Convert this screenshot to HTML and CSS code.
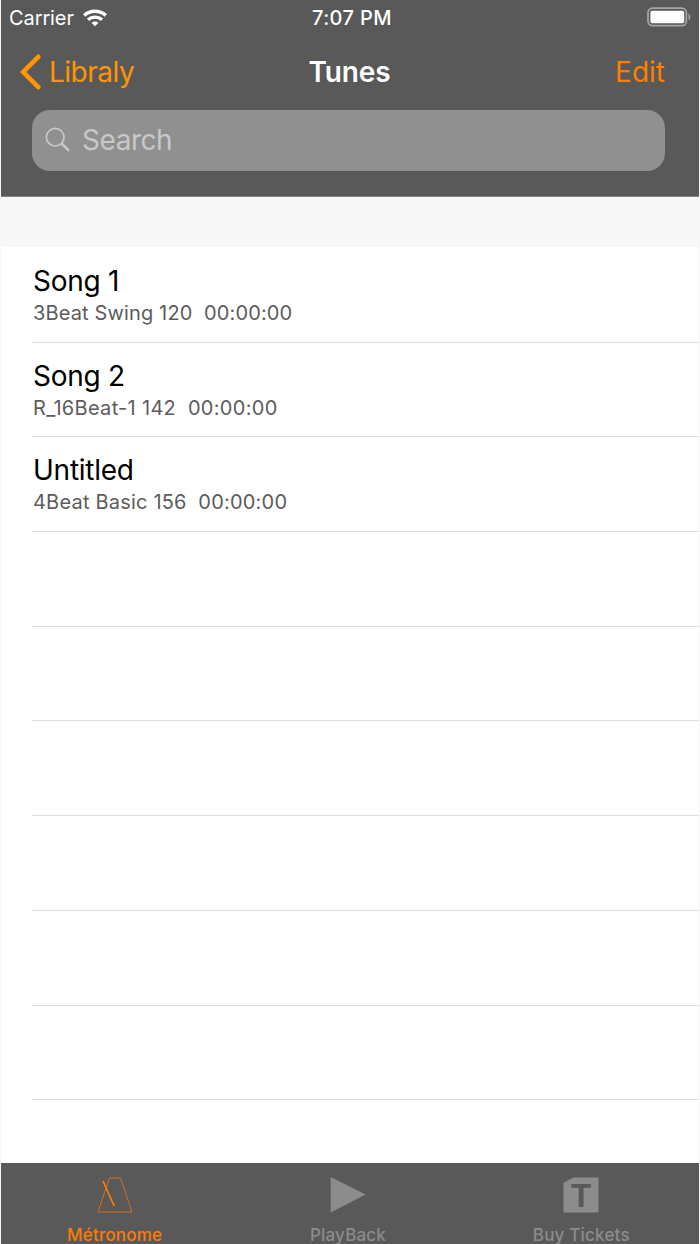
FILE: index.html
```html
<!DOCTYPE html>
<html lang="en">

<head>
    <meta charset="utf-8">
    <title>Tunes</title>
    <link rel="stylesheet" href="styles.css">
</head>

<body>
    <div class="phone">
        <header class="top">
            <div class="status-bar">
                <div class="carrier">
                    <span class="carrier-name">Carrier</span>
                    <svg class="wifi" width="24" height="18" viewBox="0 0 24 18">
                        <path d="M1.2 6.4C7.2.8 16.8.8 22.8 6.4" />
                        <path d="M5 10.7c3.9-3.5 10.1-3.5 14 0" />
                        <path class="dot" d="M12 17.2l-3.5-3.5c2-1.7 5-1.7 7 0z" />
                    </svg>
                </div>
                <span class="time">7:07 PM</span>
                <svg class="battery" width="45" height="20" viewBox="0 0 45 20">
                    <rect class="shell" x="1" y="1.2" width="38.4" height="17.4" rx="4.5" />
                    <rect class="charge" x="3.4" y="3.8" width="33.8" height="12.5" rx="2" />
                    <path class="cap" d="M41.5 6.5c2.4 1.2 2.4 5.6 0 6.8z" />
                </svg>
            </div>
            <nav class="nav-bar">
                <a class="back">
                    <svg width="22" height="36" viewBox="0 0 22 36">
                        <path d="M19.3 2.8L4.2 18l15.1 15.2" />
                    </svg>
                    <span class="back-label">Libraly</span>
                </a>
                <h1 class="title">Tunes</h1>
                <a class="edit">Edit</a>
            </nav>
            <div class="search">
                <svg width="26" height="26" viewBox="0 0 26 26">
                    <circle cx="10.2" cy="10.2" r="8.8" />
                    <path d="M16.8 16.8l6.5 6.3" />
                </svg>
                <span class="search-label">Search</span>
            </div>
        </header>

        <div class="section-head"></div>

        <ul class="tunes">
            <li class="tune">
                <p class="name">Song 1</p>
                <p class="info">3Beat Swing 120&nbsp; 00:00:00</p>
            </li>
            <li class="tune">
                <p class="name">Song 2</p>
                <p class="info info-wide">R_16Beat-1 142&nbsp; 00:00:00</p>
            </li>
            <li class="tune">
                <p class="name">Untitled</p>
                <p class="info info-mid">4Beat Basic 156&nbsp; 00:00:00</p>
            </li>
            <li class="tune"></li>
            <li class="tune"></li>
            <li class="tune"></li>
            <li class="tune"></li>
            <li class="tune"></li>
            <li class="tune"></li>
        </ul>

        <footer class="tab-bar">
            <a class="tab active">
                <svg class="metronome" width="36" height="36" viewBox="0 0 36 36">
                    <path class="body" d="M12.5 1h11L35 35H1z" />
                    <path class="needle" d="M6 4l11.2 25" />
                </svg>
                <span class="tab-label">Métronome</span>
            </a>
            <a class="tab">
                <svg width="36" height="36" viewBox="0 0 36 36">
                    <path d="M.7 0l35 17.6L.7 35.4z" />
                </svg>
                <span class="tab-label">PlayBack</span>
            </a>
            <a class="tab">
                <svg width="36" height="36" viewBox="0 0 36 36">
                    <path d="M10.5.5h25v35H.5V5.8z" />
                    <text class="letter" x="18.1" y="29.7" text-anchor="middle">T</text>
                </svg>
                <span class="tab-label">Buy Tickets</span>
            </a>
        </footer>
    </div>
</body>

</html>
```
FILE: styles.css
```css
* {
    box-sizing: border-box;
}

body {
    margin: 0;
    background: #fff;
    font-family: Inter, "Liberation Sans", sans-serif;
}

svg {
    display: block;
    flex: none;
}

.phone {
    display: flex;
    flex-direction: column;
    height: 1244px;
    border: solid #f6f6f6;
    border-width: 0 1px;
    overflow: hidden;
}

/* header */
.top {
    height: 197px;
    flex: none;
    background: #595959;
    border-bottom: 1px solid #848484;
}

.status-bar {
    display: grid;
    grid-template-columns: 1fr auto 1fr;
    align-items: center;
    height: 36px;
    padding: 0 8px;
    color: #fff;
    font-size: 20px;
}

.carrier {
    display: flex;
    align-items: center;
    gap: 9px;
    letter-spacing: -.1px;
}

.wifi {
    margin-top: -1px;
    fill: none;
    stroke: #fff;
    stroke-width: 3.4;
}

.wifi .dot {
    fill: #fff;
    stroke: none;
}

.time {
    font-weight: 500;
    padding-left: 4px;
    letter-spacing: .4px;
}

.battery {
    justify-self: end;
    margin-top: -2px;
    margin-right: -1px;
}

.shell {
    fill: none;
    stroke: #a5a5a5;
    stroke-width: 1.7;
}

.charge {
    fill: #fff;
}

.cap {
    fill: #a5a5a5;
}

.nav-bar {
    display: grid;
    grid-template-columns: 1fr auto 1fr;
    align-items: center;
    height: 74px;
    padding: 0 34px 2px 18px;
    font-size: 28px;
}

.back {
    display: flex;
    align-items: center;
    gap: 8px;
    color: #ff9500;
    letter-spacing: -.5px;
}

.back svg {
    fill: none;
    stroke: #ff9500;
    stroke-width: 4.6;
    stroke-linecap: round;
    stroke-linejoin: miter;
}

.title {
    margin: 0;
    padding-left: 15px;
    color: #fff;
    font-size: 28px;
    font-weight: 600;
    letter-spacing: -.1px;
}

.edit {
    justify-self: end;
    color: #ff8000;
}

.search {
    display: flex;
    align-items: center;
    gap: 11px;
    height: 61px;
    margin: 0 34px 0 31px;
    padding: 0 13px 1px;
    border-radius: 18px;
    background: #909090;
    color: #c8c8c8;
    font-size: 28px;
    letter-spacing: -.45px;
}

.search svg {
    fill: none;
    stroke: #c8c8c8;
    stroke-width: 1.7;
    stroke-linecap: round;
}

.search svg path {
    stroke-width: 2.6;
}

/* list */
.section-head {
    height: 50px;
    flex: none;
    background: #f7f7f7;
}

.tunes {
    flex: 1;
    margin: 0;
    padding: .8px 0 0 31px;
    list-style: none;
}

.tune {
    height: 94.72px;
    padding: 16px 0 0 1px;
    border-bottom: 1px solid #dcdcdc;
}

.tune p {
    margin: 0;
    white-space: nowrap;
}

.name {
    color: #000;
    font-size: 28px;
    line-height: 34px;
    letter-spacing: -.25px;
}

.info {
    color: #5c5c5c;
    font-size: 20px;
    line-height: 30px;
    letter-spacing: .14px;
}

.info-mid {
    letter-spacing: .2px;
}

.info-wide {
    letter-spacing: .3px;
}

/* tabs */
.tab-bar {
    display: grid;
    grid-template-columns: repeat(3, 1fr);
    height: 81px;
    flex: none;
    margin-left: -3px;
    padding: 14px 1px 0 0;
    background: #595959;
}

.tab {
    display: flex;
    flex-direction: column;
    align-items: center;
    gap: 12px;
    color: #8c8c8c;
    fill: #8c8c8c;
    font-size: 17px;
    font-weight: 500;
    line-height: 20px;
    letter-spacing: .2px;
}

.active {
    color: #ff7b00;
}

.metronome {
    fill: none;
    stroke: #ff7b00;
}

.metronome .body {
    stroke-width: 1;
    opacity: .7;
}

.metronome .needle {
    stroke-width: 1.8;
}

.letter {
    fill: #595959;
    font: bold 33px "Liberation Sans", sans-serif;
    letter-spacing: 0;
}
```
